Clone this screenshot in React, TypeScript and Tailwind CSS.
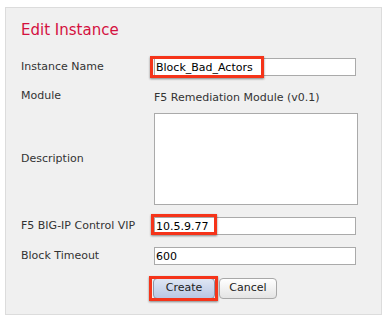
import React from 'react';

const font = { fontFamily: '"DejaVu Sans", Verdana, sans-serif' };

function Mark({ className }: { className: string }) {
  return (
    <div
      className={`pointer-events-none absolute border-[3px] border-[#f5341a] shadow-[0_1px_2px_rgba(0,0,0,0.45)] ${className}`}
    />
  );
}

function Row({ label, children, className = '' }: { label: string; children: React.ReactNode; className?: string }) {
  return (
    <div className={`flex items-center ${className}`}>
      <div className="w-[133px] shrink-0 text-[11px] text-[#333]">{label}</div>
      <div className="relative flex-1">{children}</div>
    </div>
  );
}

export default function App() {
  return (
    <div className="h-[324px] w-[390px] bg-white pt-[7px] pl-[5px]" style={font}>
      <div className="h-[308px] w-[377px] border border-[#dcdcdc] bg-[#f0f0f0] pt-[12px] pl-[15px]">
        <div className="text-[15px] leading-[20px] text-[#d4113f]">Edit Instance</div>

        <Row label="Instance Name" className="mt-[18px] h-[18px]">
          <input
            readOnly
            value="Block_Bad_Actors"
            className="block h-[18px] w-[202px] border border-[#aaa] bg-white px-[1px] text-[11px] text-black outline-none"
            style={font}
          />
          <Mark className="-left-[4px] -top-[2px] h-[22px] w-[114px]" />
        </Row>

        <Row label="Module" className="mt-[11px] h-[18px]">
          <span className="text-[11px] text-[#333]">F5 Remediation Module (v0.1)</span>
        </Row>

        <Row label="Description" className="mt-[8px] h-[92px]">
          <textarea
            readOnly
            className="block h-[92px] w-[204px] resize-none border border-[#aaa] bg-white outline-none"
          />
        </Row>

        <Row label="F5 BIG-IP Control VIP" className="mt-[12px] h-[18px]">
          <input
            readOnly
            value="10.5.9.77"
            className="block h-[18px] w-[202px] border border-[#aaa] bg-white px-[1px] text-[11px] text-black outline-none"
            style={font}
          />
          <Mark className="-left-[3px] -top-[3px] h-[21px] w-[66px]" />
        </Row>

        <Row label="Block Timeout" className="mt-[12px] h-[18px]">
          <input
            readOnly
            value="600"
            className="block h-[18px] w-[202px] border border-[#aaa] bg-white px-[1px] text-[11px] text-black outline-none"
            style={font}
          />
        </Row>

        <div className="mt-[12px] flex h-[22px] items-center pl-[132px]">
          <div className="relative">
            <button
              className="block h-[21px] w-[62px] rounded-[4px] border border-[#8c96a8] bg-gradient-to-b from-[#dfe6f4] to-[#b9c7e3] text-[11px] text-[#222]"
              style={font}
            >
              Create
            </button>
            <Mark className="-left-[4px] -top-[2px] h-[25px] w-[69px]" />
          </div>
          <button
            className="ml-[4px] block h-[21px] w-[58px] rounded-[4px] border border-[#a8a8a8] bg-gradient-to-b from-white to-[#e4e4e4] text-[11px] text-[#222]"
            style={font}
          >
            Cancel
          </button>
        </div>
      </div>
    </div>
  );
}
